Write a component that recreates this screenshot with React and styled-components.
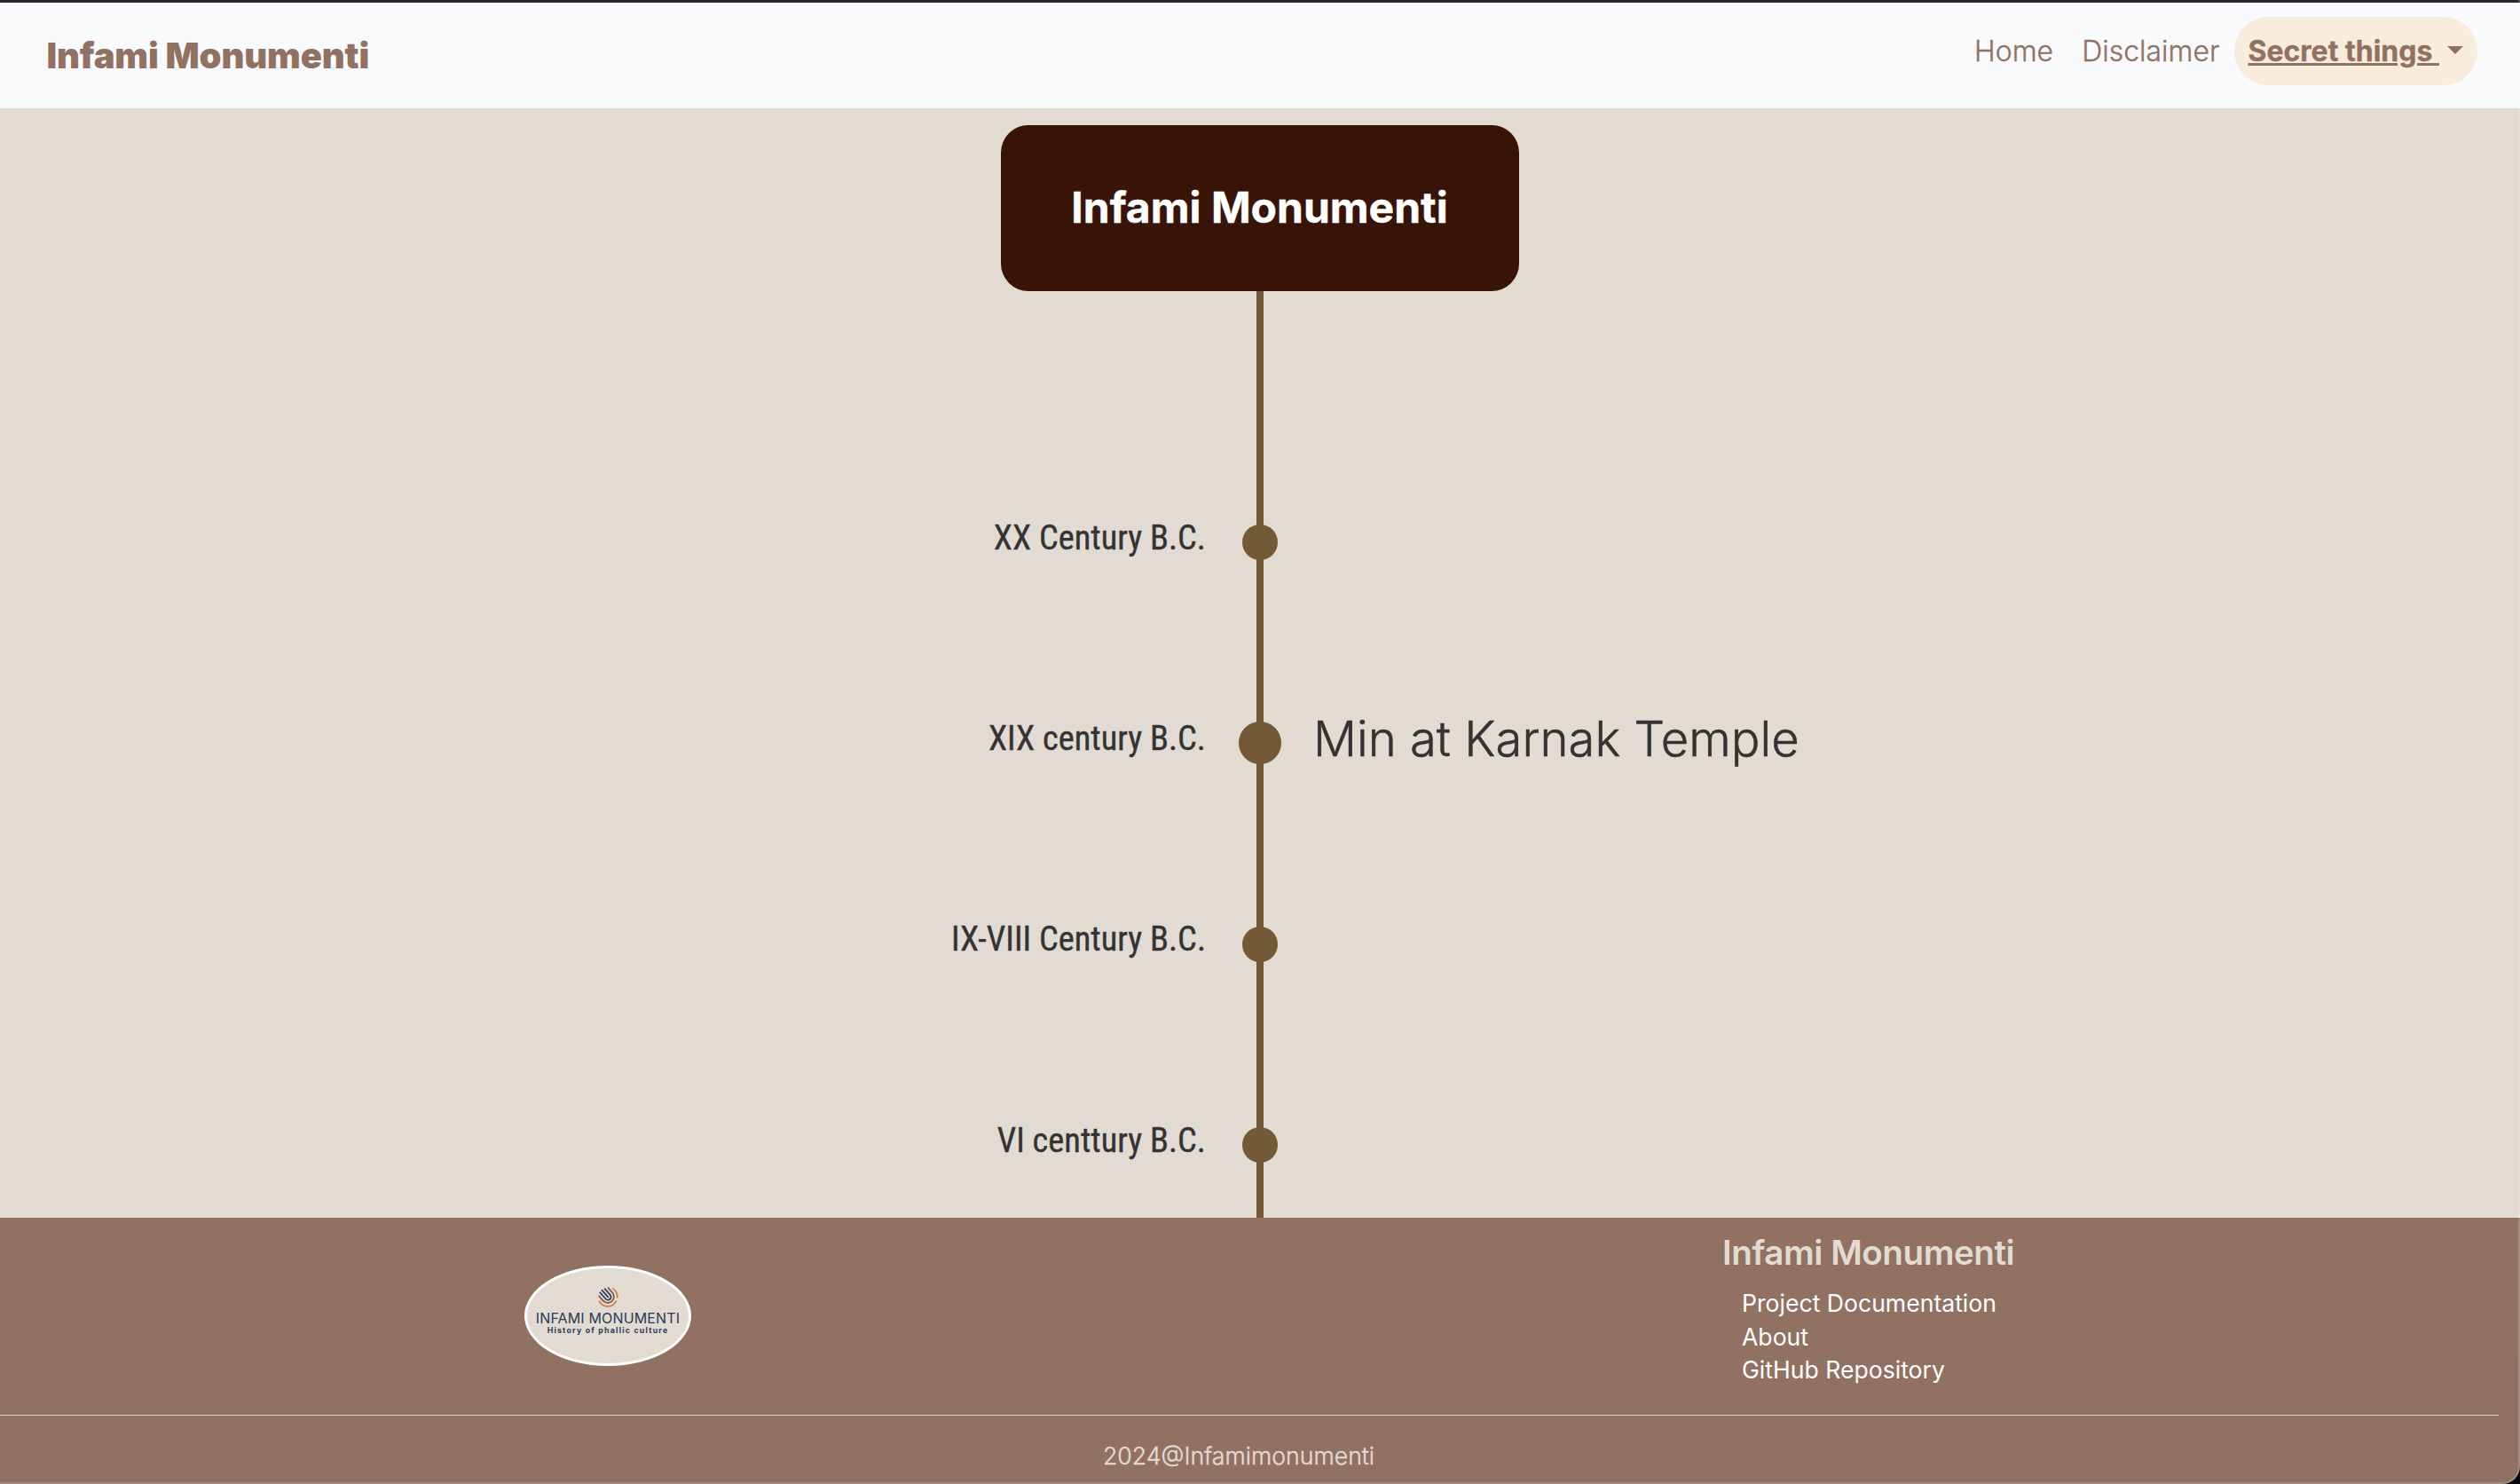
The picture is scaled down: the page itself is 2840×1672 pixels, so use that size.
import React from "react";
import styled, { createGlobalStyle } from "styled-components";

const c = {
  brown: "#917162",
  sand: "#e2dbd1",
  bronze: "#735935",
  ink: "#333333",
  navy: "#2b3a58",
};

const GlobalStyle = createGlobalStyle`
  *, *::before, *::after { box-sizing: border-box; }
  body { margin: 0; background: #05090d; font-family: Inter, "Liberation Sans", sans-serif; }
  h1, h2, h3, p, ul { margin: 0; padding: 0; font-weight: inherit; }
  ul { list-style: none; }
  a { color: inherit; text-decoration: none; }
`;

const Page = styled.div`
  position: relative;
  display: flex;
  flex-direction: column;
  width: 2840px;
  height: 1672px;
  overflow: hidden;
  background: ${c.sand};
`;

const WindowEdge = styled.div`
  position: absolute;
  inset: 0;
  pointer-events: none;
  border: solid rgba(255, 255, 255, 0.18);
  border-width: 0 2px 2px 0;
  border-bottom-right-radius: 20px;
  box-shadow: 0 0 0 20px #05090d;
`;

const Header = styled.header`
  display: flex;
  justify-content: space-between;
  align-items: flex-start;
  flex: none;
  height: 122px;
  padding: 0 48px 0 52.5px;
  border-top: 3px solid #2a262e;
  background: #f8fafb;
  color: ${c.brown};
`;

const Brand = styled.a`
  font-size: 40px;
  font-weight: 900;
  letter-spacing: -0.15px;
  line-height: 119px;
`;

const Nav = styled.nav`
  display: flex;
  padding-top: 16px;
`;

const NavLink = styled.a`
  display: block;
  padding: 0 16px;
  font-size: 32px;
  font-weight: 300;
  line-height: 77px;
  -webkit-text-stroke: 0.35px;
`;

const Toggle = styled(NavLink)`
  border-radius: 40px;
  background: #f8ecdc;
  font-weight: 700;
`;

const ToggleText = styled.span`
  text-decoration: underline;
  text-decoration-thickness: 3px;
  white-space: pre;
`;

const Caret = styled.span`
  display: inline-block;
  margin-left: 9px;
  vertical-align: 8px;
  border-top: 9.6px solid;
  border-left: 9.6px solid transparent;
  border-right: 9.6px solid transparent;
`;

const Main = styled.main`
  display: flex;
  flex-direction: column;
  align-items: center;
  flex: 1;
  min-height: 0;
  overflow: hidden;
  padding-top: 19px;
`;

const Hero = styled.h1`
  flex: none;
  width: 584px;
  padding-right: 1px;
  border-radius: 31px;
  background: #381407;
  color: #fff;
  font-size: 48px;
  font-weight: 700;
  line-height: 186px;
  height: 187px;
  text-align: center;
  -webkit-text-stroke: 0.4px;
`;

const Timeline = styled.ul`
  flex: none;
  width: 100%;
  padding-top: 169.7px;
  background: linear-gradient(${c.bronze}, ${c.bronze}) center / 8px 100% no-repeat;
`;

const Entry = styled.li`
  display: grid;
  grid-template-columns: 1fr 120px 1fr;
  align-items: center;
  height: 226.4px;
  color: ${c.ink};
`;

const Period = styled.span`
  padding: 0 1px 11.5px 0;
  font-family: "Roboto Condensed", Roboto, sans-serif;
  font-stretch: 75%;
  font-size: 38.4px;
  font-weight: 400;
  text-align: right;
  -webkit-text-stroke: 0.35px;
`;

const Dot = styled.span`
  justify-self: center;
  width: ${(p) => (p.$active ? 48 : 40)}px;
  height: ${(p) => (p.$active ? 48 : 40)}px;
  border-radius: 50%;
  background: ${c.bronze};
`;

const Monument = styled.span`
  padding-bottom: 10px;
  font-size: 54.4px;
  font-weight: 300;
  -webkit-text-stroke: 0.5px;
`;

const Footer = styled.footer`
  flex: none;
  height: 300px;
  background: ${c.brown};
  color: ${c.sand};
`;

const FooterTop = styled.div`
  display: flex;
  justify-content: space-between;
  width: 2816px;
  height: 223px;
  padding: 19px 537px 0 591px;
  border-bottom: 1px solid #dcdcc8;
`;

const Badge = styled.div`
  display: flex;
  flex-direction: column;
  align-items: center;
  width: 188px;
  height: 113px;
  margin-top: 35px;
  padding-top: 20px;
  border: 3px solid #fff;
  border-radius: 50%;
  background: ${c.sand};
  color: ${c.navy};
  white-space: nowrap;
`;

const BadgeName = styled.span`
  margin-top: 2px;
  font-size: 16px;
  font-weight: 400;
  letter-spacing: 0.15px;
  line-height: 20px;
`;

const BadgeTag = styled.span`
  margin-top: -2px;
  font-size: 8.8px;
  font-weight: 700;
  letter-spacing: 1.2px;
  line-height: 12px;
`;

const Links = styled.div`
  width: 338px;
`;

const LinksTitle = styled.h2`
  font-size: 38.6px;
  font-weight: 600;
  letter-spacing: -0.45px;
  line-height: 40px;
`;

const LinkList = styled.ul`
  padding: 19px 0 0 22px;
  color: #fff;
  font-size: 26.6px;
  line-height: 37.6px;
`;

const Copyright = styled.p`
  width: 2792px;
  font-size: 26.66px;
  font-weight: 300;
  line-height: 90px;
  text-align: center;
  -webkit-text-stroke: 0.4px;
`;

function LogoMark() {
  return (
    <svg width="24" height="24" viewBox="-12 -12 24 24" fill="none" strokeWidth="1.7" strokeLinecap="round">
      <g transform="rotate(-42)">
        <path d="M0-10V0.5" stroke={c.navy} />
        <path d="M-3.4-9.4V0.3A3.4 3.4 0 0 0 3.4 0.3V-8.8" stroke={c.navy} />
        <path d="M-6.9-7.2V0A6.9 6.9 0 0 0 6.9 0V-7.2" stroke="#7c5547" />
        <path d="M-10.5-2.5A10.6 10.6 0 0 0 3.5 10.1" stroke="#c97c50" />
        <path d="M7.2 7.8A10.6 10.6 0 0 0 10.3-3" stroke="#c97c50" />
      </g>
    </svg>
  );
}

const entries = [
  { period: "XX Century B.C." },
  { period: "XIX century B.C.", monument: "Min at Karnak Temple" },
  { period: "IX-VIII Century B.C." },
  { period: "VI centtury B.C." },
];

const footerLinks = ["Project Documentation", "About", "GitHub Repository"];

export default function App() {
  return (
    <>
      <GlobalStyle />
      <Page>
        <Header>
          <Brand href="#">Infami Monumenti</Brand>
          <Nav>
            <NavLink href="#">Home</NavLink>
            <NavLink href="#">Disclaimer</NavLink>
            <Toggle href="#">
              <ToggleText>{"Secret things "}</ToggleText>
              <Caret />
            </Toggle>
          </Nav>
        </Header>
        <Main>
          <Hero>Infami Monumenti</Hero>
          <Timeline>
            {entries.map((e) => (
              <Entry key={e.period}>
                <Period>{e.period}</Period>
                <Dot $active={Boolean(e.monument)} />
                {e.monument && <Monument>{e.monument}</Monument>}
              </Entry>
            ))}
          </Timeline>
        </Main>
        <Footer>
          <FooterTop>
            <Badge>
              <LogoMark />
              <BadgeName>INFAMI MONUMENTI</BadgeName>
              <BadgeTag>History of phallic culture</BadgeTag>
            </Badge>
            <Links>
              <LinksTitle>Infami Monumenti</LinksTitle>
              <LinkList>
                {footerLinks.map((l) => (
                  <li key={l}>
                    <a href="#">{l}</a>
                  </li>
                ))}
              </LinkList>
            </Links>
          </FooterTop>
          <Copyright>2024@Infamimonumenti</Copyright>
        </Footer>
        <WindowEdge />
      </Page>
    </>
  );
}
